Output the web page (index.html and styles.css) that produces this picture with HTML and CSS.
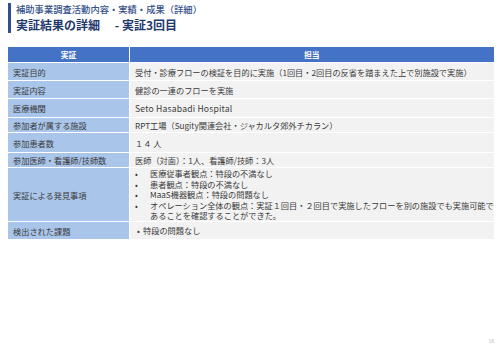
FILE: index.html
```html
<!DOCTYPE html>
<html lang="ja">
<head>
<meta charset="utf-8">
<link rel="stylesheet" href="styles.css">
</head>
<body>
<div class="slide">
  <header class="title">
    <div class="sub">補助事業調査活動内容・実績・成果（詳細）</div>
    <div class="main">実証結果の詳細　 - 実証3回目</div>
  </header>
  <div class="grid">
    <div class="th">実証</div>
    <div class="th">担当</div>

    <div class="lc">実証目的</div>
    <div class="rc">受付・診療フローの検証を目的に実施（1回目・2回目の反省を踏まえた上で別施設で実施）</div>

    <div class="lc">実証内容</div>
    <div class="rc">健診の一連のフローを実施</div>

    <div class="lc">医療機関</div>
    <div class="rc latin">Seto Hasabadi Hospital</div>

    <div class="lc">参加者が属する施設</div>
    <div class="rc">RPT工場（Sugity関連会社・ジャカルタ郊外チカラン）</div>

    <div class="lc">参加患者数</div>
    <div class="rc">１４ 人</div>

    <div class="lc">参加医師・看護師/技師数</div>
    <div class="rc">医師（対面）：1人、看護師/技師：3人</div>

    <div class="lc">実証による発見事項</div>
    <div class="rc">
      <ul class="list">
        <li>医療従事者観点：特段の不満なし</li>
        <li>患者観点：特段の不満なし</li>
        <li>MaaS機器観点：特段の問題なし</li>
        <li>オペレーション全体の観点：実証１回目・２回目で実施したフローを別の施設でも実施可能で<br>あることを確認することができた。</li>
      </ul>
    </div>

    <div class="lc">検出された課題</div>
    <div class="rc">
      <ul class="list tight">
        <li>特段の問題なし</li>
      </ul>
    </div>
  </div>
  <div class="pageno">18</div>
</div>
</body>
</html>
```

FILE: styles.css
```css
html, body {
  margin: 0;
  padding: 0;
  background: #ffffff;
}
body {
  font-family: "Noto Sans CJK JP", "Noto Sans", sans-serif;
  color: #3a3a3a;
  width: 500px;
  height: 346px;
  overflow: hidden;
}
.slide {
  position: relative;
  width: 500px;
  height: 346px;
  padding: 3px 8px 0 8px;
  box-sizing: border-box;
}
.title {
  border-left: 3px solid #2f4f8f;
  padding-left: 5px;
  height: 30px;
  display: flex;
  flex-direction: column;
  justify-content: center;
}
.sub {
  font-size: 9.3px;
  line-height: 13px;
  color: #33508a;
  font-weight: 500;
}
.main {
  font-size: 12px;
  line-height: 17px;
  font-weight: 700;
  color: #1f3a6e;
}
.grid {
  margin-top: 14px;
  display: grid;
  grid-template-columns: 121px 1fr;
  grid-template-rows: 15px 17px 17px 18px 14px 19px 14px 53px 17px;
  gap: 1px;
  font-size: 8.2px;
}
.th {
  background: #4472c4;
  color: #ffffff;
  font-weight: 700;
  display: flex;
  align-items: center;
  justify-content: center;
  font-size: 7.8px;
}
.lc {
  background: #a9c5e9;
  display: flex;
  align-items: center;
  padding-left: 5px;
  color: #3a3a3a;
  white-space: nowrap;
}
.rc {
  background: #f2f2f2;
  display: flex;
  align-items: center;
  padding-left: 5px;
  white-space: nowrap;
}
.latin {
  font-size: 8.6px;
  letter-spacing: 0.2px;
}
.list {
  margin: 0;
  padding: 0;
  list-style: none;
  line-height: 10.5px;
}
.list li {
  position: relative;
  padding-left: 15px;
}
.list li::before {
  content: "•";
  position: absolute;
  left: 0;
  top: 0;
}
.list.tight li {
  padding-left: 8px;
}
.list.tight li::before {
  left: 2px;
}
.pageno {
  position: absolute;
  right: 6px;
  bottom: 2px;
  font-size: 5px;
  color: #b0b0b0;
}
```
